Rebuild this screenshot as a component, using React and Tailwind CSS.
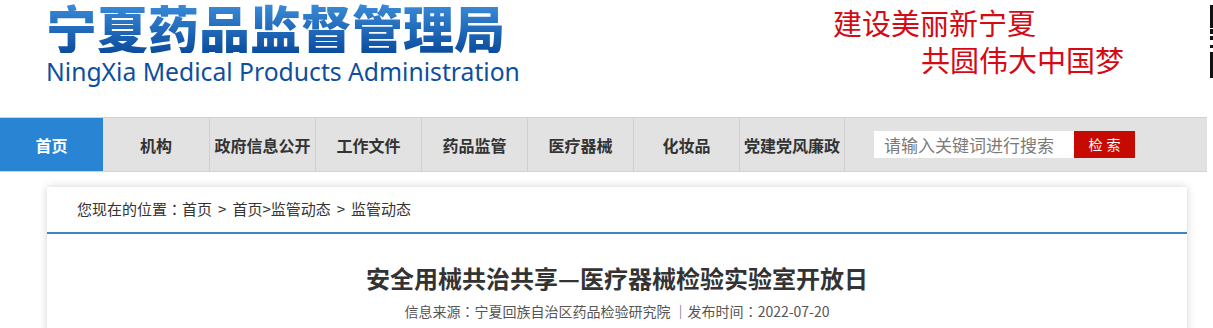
import React from "react";

const cjk = { fontFamily: '"Noto Sans CJK SC", "Noto Sans", sans-serif' };
const tc = { fontFamily: '"Noto Sans CJK TC", sans-serif' };

function QR() {
  return (
    <svg width="73" height="73" viewBox="0 0 73 73" className="block">
      <rect x="0" y="0" width="73" height="73" fill="#fff" />
      <rect x="1.5" y="1.5" width="20" height="20" fill="none" stroke="#111" strokeWidth="3" />
      <rect x="0" y="24" width="4" height="5" fill="#111" />
      <rect x="0" y="31" width="4" height="4" fill="#111" />
      <rect x="0" y="40" width="4" height="3" fill="#111" />
      <rect x="0" y="47" width="4" height="4" fill="#111" />
      <rect x="1.5" y="52" width="20" height="20" fill="none" stroke="#111" strokeWidth="3" />
    </svg>
  );
}

export default function App() {
  const nav = ["机构", "政府信息公开", "工作文件", "药品监管", "医疗器械", "化妆品", "党建党风廉政"];
  return (
    <div className="w-[1213px] h-[328px] overflow-hidden bg-white" style={cjk}>
      {/* header */}
      <div className="h-[117px] flex">
        <div className="pl-[46px] pt-[1px] w-[780px] shrink-0">
          <div className="text-[51px] leading-[52px] font-black bg-gradient-to-b from-[#3d8fdc] to-[#0a4c9e] bg-clip-text text-transparent whitespace-nowrap">
            宁夏药品监督管理局
          </div>
          <div
            className="text-[24.7px] leading-[28px] text-[#0d4f9f] whitespace-nowrap mt-[5px]"
            style={{ fontFamily: '"Noto Sans", "Open Sans", sans-serif' }}
          >
            NingXia Medical Products Administration
          </div>
        </div>
        <div className="pl-[53px] pt-[4px] w-[430px] shrink-0 text-[#d40a14] text-[29px] leading-[37px] whitespace-nowrap">
          <div>建设美丽新宁夏</div>
          <div className="pl-[88px]">共圆伟大中国梦</div>
        </div>
        <div className="pt-[5px] shrink-0">
          <QR />
        </div>
      </div>

      {/* nav */}
      <div className="w-[1207px] h-[55px] bg-[#e2e2e2] border-y border-[#d2d2d2] flex items-stretch">
        <div className="w-[103px] bg-[#2a84d4] text-white text-[16px] font-bold flex items-center justify-center">
          首页
        </div>
        {nav.map((n, i) => (
          <div
            key={n}
            className={`w-[106px] text-[#333] text-[16px] font-bold flex items-center justify-center whitespace-nowrap ${
              i > 0 ? "border-l border-[#d0d0d0]" : ""
            } ${i === nav.length - 1 ? "border-r border-[#d0d0d0]" : ""}`}
          >
            {n}
          </div>
        ))}
        <div className="flex items-center pl-[29px]">
          <div className="w-[200px] h-[27px] bg-white flex items-center pl-[10px] text-[17px] text-[#7a7a7a] whitespace-nowrap">
            请输入关键词进行搜索
          </div>
          <div className="w-[61px] h-[27px] bg-[#c70a00] text-white text-[14px] tracking-[4px] flex items-center justify-center pl-[4px]">
            检索
          </div>
        </div>
      </div>

      {/* content card */}
      <div className="pt-[15px] pl-[47px]">
        <div className="w-[1140px] h-[200px] bg-white shadow-[0_0_8px_rgba(0,0,0,0.18)]">
          <div className="h-[47px] border-b-2 border-[#3a86c8] flex items-center pl-[30px] text-[15px] text-[#333] whitespace-nowrap">
            您现在的位置<span style={tc}>：</span>首页<span className="mx-[6px]">&gt;</span>首页&gt;监管动态<span className="mx-[6px]">&gt;</span>监管动态
          </div>
          <div className="pt-[28px] text-center text-[24px] leading-[32px] font-bold text-[#333]">
            安全用械共治共享—医疗器械检验实验室开放日
          </div>
          <div className="pt-[5px] text-center text-[14px] leading-[24px] text-[#555] whitespace-nowrap">
            信息来源<span style={tc}>：</span>宁夏回族自治区药品检验研究院 ｜发布时间<span style={tc}>：</span>2022-07-20
          </div>
        </div>
      </div>
    </div>
  );
}
